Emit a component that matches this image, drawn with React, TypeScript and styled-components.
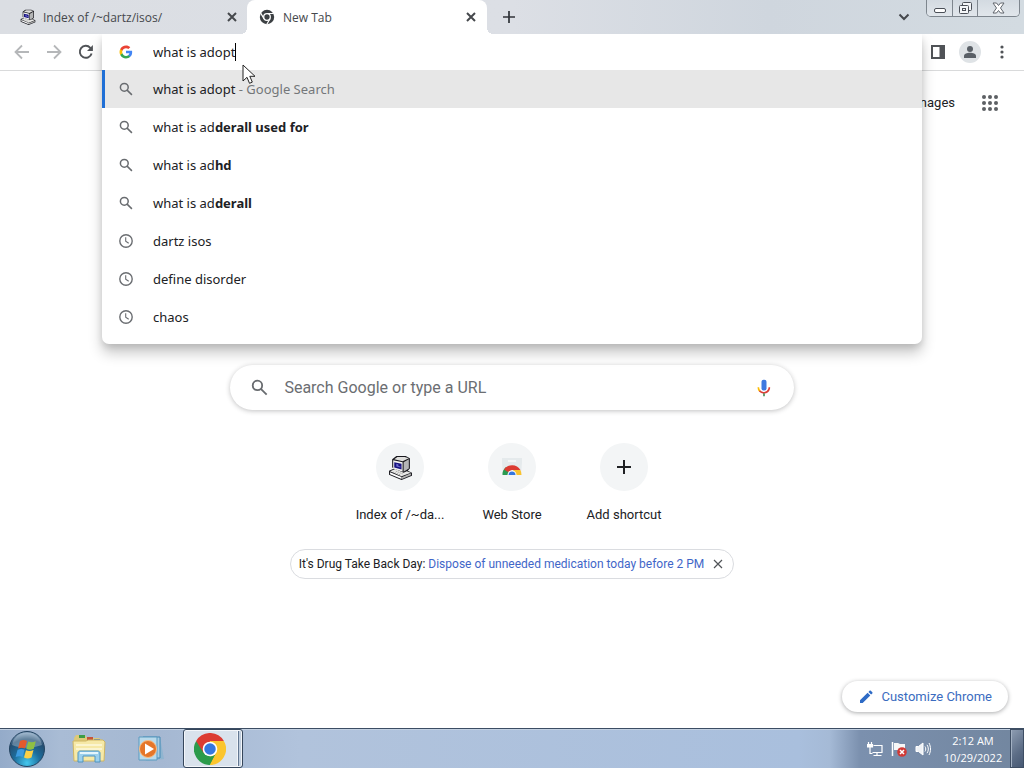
import React from 'react';
import styled, { createGlobalStyle } from 'styled-components';

const ui = '"Open Sans", "Noto Sans", sans-serif';
const omni = '"Noto Sans", "Open Sans", sans-serif';
const web = 'Roboto, "Liberation Sans", sans-serif';

const GlobalStyle = createGlobalStyle`
  * { box-sizing: border-box; }
  body { margin: 0; background: #fff; font-family: ${ui}; color: #202124; }
  button, input { font: inherit; color: inherit; }
  button { border: 0; padding: 0; background: none; }
  svg { display: block; flex: none; }
  a { color: inherit; text-decoration: none; }
`;

const Desktop = styled.div`
  min-height: 100vh;
  display: flex;
  flex-direction: column;
`;

/* ---------- tab strip ---------- */
const TabStrip = styled.header`
  height: 34px;
  display: flex;
  align-items: stretch;
  background: linear-gradient(90deg, #dbdee3 0%, #dcdfe5 50%, #cfd6de 75%, #d3dbe1 100%);
`;

const Tab = styled.div<{ $active?: boolean }>`
  position: relative;
  width: ${p => (p.$active ? 240 : 247)}px;
  padding: 0 10px 0 ${p => (p.$active ? 12 : 20)}px;
  display: flex;
  align-items: center;
  gap: ${p => (p.$active ? 8 : 7)}px;
  font-size: 12px;
  color: #45484c;
  background: ${p => (p.$active ? '#fff' : 'transparent')};
  border-radius: 8px 8px 0 0;
  ${p => p.$active && `
    &::before, &::after {
      content: '';
      position: absolute;
      bottom: 0;
      width: 6px;
      height: 6px;
    }
    &::before { left: -6px; background: radial-gradient(circle at 0 0, transparent 6px, #fff 6px); }
    &::after { right: -6px; background: radial-gradient(circle at 100% 0, transparent 6px, #fff 6px); }
  `}
`;

const TabTitle = styled.span`
  flex: 1;
  white-space: nowrap;
`;

const IconButton = styled.button<{ $size?: number; $round?: string }>`
  width: ${p => p.$size ?? 16}px;
  height: ${p => p.$size ?? 16}px;
  display: grid;
  place-items: center;
  flex: none;
  border-radius: 50%;
  background: ${p => p.$round ?? 'transparent'};
`;

const NewTab = styled.div`
  flex: 1;
  display: flex;
  align-items: center;
  padding-left: 12px;
`;

const TabSearch = styled.div`
  display: flex;
  align-items: center;
  padding-right: 14px;
`;

const WindowButtons = styled.div`
  display: flex;
  height: 17px;
  margin-right: 4px;
  border: 1px solid #7e868e;
  border-top: 0;
  border-radius: 0 0 5px 5px;
  overflow: hidden;
`;

const WindowButton = styled.button<{ $wide?: boolean }>`
  width: ${p => (p.$wide ? 42 : 25)}px;
  display: grid;
  place-items: center;
  background: linear-gradient(#d3dae1, #e1e6eb);
  & + & { border-left: 1px solid #7e868e; }
`;

/* ---------- toolbar ---------- */
const Toolbar = styled.div`
  height: 37px;
  display: flex;
  background: #fff;
  border-bottom: 1px solid #d9dadb;
`;

const Nav = styled.nav`
  width: 102px;
  padding-left: 10px;
  display: flex;
  align-items: center;
  gap: 8px;
`;

const Actions = styled.div`
  width: 102px;
  padding: 0 10px 0 4px;
  display: flex;
  align-items: center;
  justify-content: space-between;
`;

const OmniboxSlot = styled.div`
  position: relative;
  z-index: 2;
  flex: 1;
`;

const Omnibox = styled.div`
  position: absolute;
  top: 0;
  left: 0;
  right: 0;
  padding-bottom: 8px;
  background: #fff;
  border-radius: 0 0 7px 7px;
  box-shadow: 0 9px 14px rgba(0, 0, 0, 0.22), 0 3px 6px rgba(0, 0, 0, 0.1);
  clip-path: inset(0 -24px -32px -24px);
  font-family: ${omni};
  font-size: 13px;
`;

const Field = styled.label`
  height: 36px;
  padding-left: 17px;
  display: flex;
  align-items: center;
`;

const FieldInput = styled.input`
  field-sizing: content;
  margin-left: 20px;
  padding: 0;
  border: 0;
  outline: 0;
  background: none;
`;

const Caret = styled.span`
  width: 1px;
  height: 18px;
  background: #000;
`;

const Suggestions = styled.ul`
  margin: 0;
  padding: 0;
  list-style: none;
`;

const Suggestion = styled.button<{ $selected?: boolean }>`
  width: 100%;
  height: 38px;
  padding-left: 14px;
  display: flex;
  align-items: center;
  gap: 20px;
  border-left: 3px solid ${p => (p.$selected ? '#1f6fd6' : 'transparent')};
  background: ${p => (p.$selected ? '#e7e7e7' : 'transparent')};
  background-clip: border-box;
  white-space: pre;
`;

const Muted = styled.span`
  color: #74777a;
`;

/* ---------- new tab page ---------- */
const Page = styled.main`
  flex: 1;
  display: flex;
  flex-direction: column;
  align-items: center;
  font-family: ${web};
`;

const PageLinks = styled.div`
  align-self: stretch;
  height: 64px;
  padding-right: 24px;
  display: flex;
  align-items: center;
  justify-content: flex-end;
  gap: 25px;
  font-size: 13px;
  line-height: 18px;
`;

const SearchBox = styled.label`
  width: 55%;
  min-width: 300px;
  height: 45px;
  margin-top: 230px;
  padding: 0 20px 0 21px;
  display: flex;
  align-items: center;
  gap: 16px;
  border-radius: 23px;
  background: #fff;
  box-shadow: 0 1px 5px rgba(32, 33, 36, 0.28);
`;

const SearchInput = styled.input`
  flex: 1;
  min-width: 0;
  padding: 0;
  border: 0;
  outline: 0;
  background: none;
  font-size: 16px;
  &::placeholder { color: #6b6e72; opacity: 1; }
`;

const Shortcuts = styled.div`
  display: flex;
  margin-top: 33px;
`;

const Shortcut = styled.a`
  width: 112px;
  display: flex;
  flex-direction: column;
  align-items: center;
  gap: 16px;
  font-size: 13px;
  line-height: 16px;
`;

const Disc = styled.span`
  width: 48px;
  height: 48px;
  display: grid;
  place-items: center;
  border-radius: 50%;
  background: #f3f5f6;
`;

const Promo = styled.p`
  margin: 26px 0 0;
  height: 30px;
  padding: 0 7px 0 8px;
  display: flex;
  align-items: center;
  gap: 6px;
  border: 1px solid #dadce0;
  border-radius: 15px;
  font-size: 12px;
  white-space: nowrap;
  a { color: #3f66c8; }
`;

const Customize = styled.button`
  align-self: flex-end;
  height: 31px;
  margin: auto 16px 16px;
  padding: 0 16px;
  display: flex;
  align-items: center;
  gap: 7px;
  border-radius: 16px;
  background: #fff;
  box-shadow: 0 1px 4px rgba(32, 33, 36, 0.38);
  font-size: 13px;
  color: #3b6cc0;
`;

/* ---------- taskbar ---------- */
const Taskbar = styled.footer`
  height: 40px;
  display: flex;
  align-items: stretch;
  border-top: 1px solid #3c4d63;
  box-shadow: inset 0 1px 0 #c3d1e2;
  background: linear-gradient(90deg, #94abc9 0, #a9bcd5 60px, #a5b8d2 160px, #b1c3dc 300px, #a9bfdd 78%, #a5bad6 81%, #7b90ae 84%, #72869f 100%);
`;

const TaskButton = styled.button<{ $width: number }>`
  width: ${p => p.$width}px;
  display: grid;
  place-items: center;
`;

const ActiveTask = styled.button`
  width: 60px;
  margin-left: 4px;
  display: grid;
  place-items: center start;
  padding-left: 10px;
  border: 1px solid #35465b;
  border-radius: 3px;
  background: linear-gradient(90deg, #d9e2ec 0 53px, #f3f6fa 53px 54px, #627791 54px 55px, #c0cede 55px);
  box-shadow: inset 0 0 0 1px #f3f6fa;
`;

const Tray = styled.div`
  margin-left: auto;
  margin-right: 5px;
  display: flex;
  align-items: center;
  gap: 8px;
`;

const Clock = styled.time`
  width: 74px;
  padding-top: 3px;
  font-size: 11px;
  line-height: 17px;
  text-align: center;
  color: #fff;
`;

const ShowDesktop = styled.button`
  width: 14px;
  border: 1px solid #3e4e64;
  background: linear-gradient(135deg, #8e9db2, #5c6d86 60%, #465873);
  box-shadow: inset 1px 0 0 #a3b1c3;
`;

const Pointer = styled.svg`
  position: absolute;
  z-index: 3;
  left: 140px;
  top: 30px;
  pointer-events: none;
`;

/* ---------- drawings ---------- */
const CloseIcon = ({ size = 10, color = '#45484c', weight = 2 }) => (
  <svg width={size} height={size} viewBox="0 0 10 10" stroke={color} strokeWidth={weight}>
    <path d="M1 1l8 8M9 1L1 9" />
  </svg>
);

const ComputerIcon = ({ size }: { size: number }) => (
  <svg width={size} height={size} viewBox="0 0 24 24">
    <path d="M4 4l4-3h9l4 2v10l-2 2 4 2v3l-10 4L1 19v-4l5-2-2-1z" fill="#17171d" />
    <path d="M5 5l9 2v9l-9-3z" fill="#f3f2f0" />
    <path d="M6 4l3-2h7l4 1-6 3z" fill="#dededc" />
    <path d="M15 7l5-3v9l-5 3z" fill="#b4b5b6" />
    <path d="M6 7l7 1.500v5.500l-7-2z" fill="#17127f" />
    <path d="M8 8.500l2 .5v1.500l2 .5v1l-4-1z" fill="#6e6bd0" />
    <path d="M2 15.500l5-2 8 3.500 3-1.500 4 1.500-9 3.500z" fill="#e9e9e7" />
    <path d="M2 16.500l11 4.500v2L2 18.500z" fill="#fff" />
    <path d="M13.500 21l8.500-3.500v2L13.500 23z" fill="#b5b5b4" />
    <path d="M5 16.500l7 2.800M7.500 15.500l7 2.800" stroke="#8a8a88" strokeWidth=".8" strokeDasharray="1 1" />
  </svg>
);

const MonoChrome = () => (
  <svg width="16" height="16" viewBox="0 0 16 16">
    <circle cx="8" cy="8" r="7.2" fill="#3c4043" />
    <circle cx="8" cy="8" r="3.3" fill="none" stroke="#fff" strokeWidth="1.3" />
    <path d="M8 4.500h6.600M5 9.800L1.700 4.100M11 9.800l-3.300 5.700" stroke="#fff" strokeWidth="1.2" />
  </svg>
);

const ChromeLogo = () => (
  <svg width="32" height="32" viewBox="0 0 48 48">
    <path d="M24 24L3.2 12A24 24 0 0 1 44.8 12z" fill="#dc3b32" />
    <path d="M24 24L3.2 12A24 24 0 0 0 24 48z" fill="#2b9b4b" />
    <path d="M24 24V48A24 24 0 0 0 44.8 12H24z" fill="#fbc52d" />
    <path d="M3.2 12L14.5 30 24 24V12z" fill="#dc3b32" />
    <path d="M14.4 29.5A11 11 0 0 0 33.5 29.5L24 48 19 46z" fill="#2b9b4b" />
    <path d="M33.5 29.5L24 48h3l14-14V20z" fill="#fbc52d" />
    <circle cx="24" cy="24" r="11" fill="#fff" />
    <circle cx="24" cy="24" r="8.6" fill="#3577df" />
  </svg>
);

const GoogleG = () => (
  <svg width="14" height="14" viewBox="0 0 48 48">
    <path fill="#4285f4" d="M45.1 24.5c0-1.6-.1-3.1-.4-4.5H24v8.5h11.8c-.5 2.8-2.1 5.1-4.4 6.7v5.500h7.1c4.2-3.8 6.600-9.500 6.600-16.200z" />
    <path fill="#34a853" d="M24 46c5.9 0 10.9-2 14.6-5.300l-7.100-5.500c-2 1.3-4.5 2.1-7.5 2.1-5.7 0-10.6-3.900-12.300-9.100H4.300v5.700C8 41.1 15.4 46 24 46z" />
    <path fill="#fbbc04" d="M11.7 28.2a13 13 0 0 1 0-8.4v-5.7H4.3a22 22 0 0 0 0 19.8z" />
    <path fill="#ea4335" d="M24 10.8c3.2 0 6.1 1.1 8.4 3.3l6.3-6.3C34.9 4.2 29.9 2 24 2 15.4 2 8 6.9 4.3 14.1l7.4 5.7c1.7-5.2 6.6-9 12.3-9z" />
  </svg>
);

const Magnifier = ({ size = 14 }) => (
  <svg width={size} height={size} viewBox="0 0 14 14" fill="none" stroke="#686b6f" strokeWidth="1.5">
    <circle cx="5.3" cy="5.3" r="3.9" />
    <path d="M8.1 8.1l4.8 4.8" />
  </svg>
);

const ClockIcon = () => (
  <svg width="14" height="14" viewBox="0 0 14 14" fill="none" stroke="#6b6e72" strokeWidth="1.4">
    <circle cx="7" cy="7" r="6.2" />
    <path d="M6.7 3.2v4l3 2" strokeWidth="1.1" />
  </svg>
);

const Arrow = ({ back }: { back?: boolean }) => (
  <svg width="16" height="16" viewBox="0 0 16 16" fill="none" stroke="#b5b7b9" strokeWidth="1.8">
    <path d={back ? 'M15 8H2M8 1.5L1.5 8 8 14.5' : 'M1 8h13M8 1.5L14.5 8 8 14.5'} />
  </svg>
);

const ReloadIcon = () => (
  <svg width="16" height="16" viewBox="0 0 16 16">
    <path d="M13.6 9.4A6 6 0 1 1 12.3 3.8L14 5.5" fill="none" stroke="#505357" strokeWidth="1.9" />
    <path d="M14.9 1v5.900H9z" fill="#505357" />
  </svg>
);

const SidePanelIcon = () => (
  <svg width="16" height="16" viewBox="0 0 16 16">
    <path d="M1 1h14v14H1zM3 3v10h6.500V3z" fillRule="evenodd" fill="#505357" />
  </svg>
);

const PersonIcon = () => (
  <svg width="14" height="14" viewBox="0 0 14 14" fill="#5a6067">
    <circle cx="7" cy="4" r="3" />
    <path d="M1 13v-2c0-2 3-3.2 6-3.2s6 1.2 6 3.2v2z" />
  </svg>
);

const MenuDots = () => (
  <svg width="4" height="14" viewBox="0 0 4 14" fill="#505357">
    {[2, 7, 12].map(y => <circle key={y} cx="2" cy={y} r="1.6" />)}
  </svg>
);

const AppsIcon = () => (
  <svg width="20" height="18" viewBox="0 0 20 18" fill="#5d6064">
    {[3, 9, 15].map(y => [4, 10, 16].map(x => <circle key={`${x}-${y}`} cx={x} cy={y} r="2" />))}
  </svg>
);

const PlusIcon = ({ size = 14, color = '#202124' }) => (
  <svg width={size} height={size} viewBox="0 0 14 14" stroke={color} strokeWidth="2">
    <path d="M7 0v14M0 7h14" />
  </svg>
);

const MicIcon = () => (
  <svg width="20" height="20" viewBox="0 0 24 24" fill="none" strokeWidth="2">
    <rect x="9" y="2" width="6" height="13" rx="2.5" fill="#4079e0" />
    <path d="M5.2 11c0 2 .6 3.5 1.7 4.7" stroke="#fbbc04" />
    <path d="M6.6 15.5c3 3.2 9.2 3.3 11.2-1.5.4-1 .6-2 .6-3" stroke="#dc3f37" />
    <path d="M12 18.3v3.6" stroke="#4c8c57" />
  </svg>
);

const StoreIcon = () => (
  <svg width="24" height="24" viewBox="0 0 24 24">
    <path d="M2 3h20v4l-1 13H3L2 7z" fill="#e5eaec" />
    <path d="M8 5h8v2H8z" fill="#f4f6f6" />
    <path d="M2.5 20a9.5 9.5 0 0 1 3.5-8l4 8z" fill="#2c9a50" />
    <path d="M4 14.5a9.7 9.7 0 0 1 16.4.5H12l-4 2z" fill="#dc3b32" />
    <path d="M13 15h7.4a10 10 0 0 1 1.1 5H14z" fill="#f9c22e" />
    <path d="M7.5 20a4.5 4.5 0 0 1 9 0z" fill="#fff" />
    <path d="M8.5 20a3.5 3.5 0 0 1 7 0z" fill="#3577df" />
  </svg>
);

const PencilIcon = () => (
  <svg width="16" height="16" viewBox="0 0 16 16" fill="#2e6bc6">
    <path d="M2 11.3L9.600 3.700l2.700 2.700L4.700 14H2zM10.400 2.900l1.200-1.200c.4-.4.8-.4 1.200 0l1.500 1.500c.4.4.4.8 0 1.200l-1.200 1.200z" />
  </svg>
);

const StartOrb = () => (
  <svg width="38" height="38" viewBox="0 0 38 38">
    <defs>
      <radialGradient id="orb" cx=".5" cy=".9" r=".85">
        <stop offset="0" stopColor="#43c7ee" />
        <stop offset=".45" stopColor="#1d6d9c" />
        <stop offset=".8" stopColor="#244d70" />
        <stop offset="1" stopColor="#7e9cb8" />
      </radialGradient>
    </defs>
    <circle cx="19" cy="19" r="17.5" fill="url(#orb)" stroke="#244461" />
    <path d="M4 15C6 5 14 2.500 19 2.500S32 5 34 15c-8 3-21 4-30 0z" fill="#d3e2ed" opacity=".35" />
    <path d="M12 11c3-1.500 5-1 7 0l-2 7.500c-2-1-4-1.300-7 0z" fill="#e35a2c" />
    <path d="M20.300 11.500c2 1 4.500 1.200 7.500-.2l-2 7.500c-3 1.300-5 1.100-7.500 0z" fill="#8fc043" />
    <path d="M9.600 19.800c3-1.300 5-1 7 0l-2 7.200c-2-1-4-1.200-7 0z" fill="#3c9be0" />
    <path d="M18 20.300c2 1 4.500 1.200 7.500-.2l-2 7.400c-3 1.300-5 1.100-7.500 0z" fill="#fcd046" />
  </svg>
);

const ExplorerIcon = () => (
  <svg width="34" height="32" viewBox="0 0 34 32">
    <path d="M2 5l2-3h9l2 3h12l4 3v20H2z" fill="#ddc978" />
    <path d="M7 2h6v3H7z" fill="#3d9c46" />
    <path d="M15 4h6v4h-6z" fill="#c5543a" />
    <path d="M22 6h6v3h-6z" fill="#4d7fc0" />
    <path d="M1 8h13l2-1h15l2 2-1 19H2z" fill="#f6e9a7" stroke="#ceb563" />
    <path d="M4 12h26M4 16h26" stroke="#fbf5d0" strokeWidth="2" />
    <path d="M6 29v-9c0-1 1-2 2-2h18c1 0 2 1 2 2v9h-5v-6H11v6z" fill="#9bd0ed" stroke="#4f94bf" />
    <path d="M8 20h18" stroke="#e4f5fc" strokeWidth="2" />
  </svg>
);

const MediaPlayerIcon = () => (
  <svg width="30" height="28" viewBox="0 0 30 28">
    <path d="M8 2h15l4 22-18 2z" fill="#8fb5d0" />
    <path d="M6 2h17v21H6z" fill="#a9cde2" stroke="#4789b4" />
    <path d="M2 2h18v23H2z" fill="#b9daeb" stroke="#5b9bc0" />
    <circle cx="11" cy="14" r="8.500" fill="#e57629" stroke="#f7bd84" />
    <path d="M8 8.500v11l9-5.500z" fill="#fff" />
  </svg>
);

const NetworkIcon = () => (
  <svg width="16" height="16" viewBox="0 0 16 16" fill="none" stroke="#fff" strokeWidth="1.2">
    <path d="M6.500 4.500h8.500v7H5.500M10 11.500v2.500M6.500 14.500h8M1.500 1v3M4.500 1v3M3 6v6.500h2.500" />
    <path d="M.500 3.500h5v2.500h-5z" fill="#fff" />
  </svg>
);

const ActionIcon = () => (
  <svg width="16" height="16" viewBox="0 0 16 16">
    <path d="M1.500 1v14" stroke="#fff" strokeWidth="1.5" />
    <path d="M3 2h4l2 1h5v7H9L7 9H3z" fill="#f7f7f7" />
    <circle cx="11" cy="11" r="4.8" fill="#d13a36" />
    <path d="M9 9l4 4M13 9l-4 4" stroke="#fff" strokeWidth="1.5" />
  </svg>
);

const VolumeIcon = () => (
  <svg width="16" height="16" viewBox="0 0 16 16" fill="none" stroke="#fff">
    <path d="M1 5.500h2.500L8 2v12l-4.500-3.500H1z" fill="#eef1f5" />
    <path d="M10 5.500c1 1.500 1 3.500 0 5M12 3.800c1.800 2.500 1.800 6 0 8.400M14 2c2 4 2 8 0 12" />
  </svg>
);

/* ---------- data ---------- */
type Item = { typed: string; bold?: string; note?: string; history?: boolean };

const items: Item[] = [
  { typed: 'what is adopt', note: ' - Google Search' },
  { typed: 'what is ad', bold: 'derall used for' },
  { typed: 'what is ad', bold: 'hd' },
  { typed: 'what is ad', bold: 'derall' },
  { typed: 'dartz isos', history: true },
  { typed: 'define disorder', history: true },
  { typed: 'chaos', history: true },
];

export default function App() {
  return (
    <Desktop>
      <GlobalStyle />
      <TabStrip>
        <Tab>
          <ComputerIcon size={16} />
          <TabTitle>Index of /~dartz/isos/</TabTitle>
          <IconButton $size={10} aria-label="Close tab"><CloseIcon /></IconButton>
        </Tab>
        <Tab $active>
          <MonoChrome />
          <TabTitle>New Tab</TabTitle>
          <IconButton $size={12} aria-label="Close tab"><CloseIcon /></IconButton>
        </Tab>
        <NewTab>
          <IconButton $size={20} aria-label="New tab"><PlusIcon size={12} color="#303338" /></IconButton>
        </NewTab>
        <TabSearch>
          <IconButton aria-label="Search tabs">
            <svg width="12" height="8" viewBox="0 0 12 8" fill="none" stroke="#45484c" strokeWidth="2"><path d="M1.500 1.500L6 6l4.500-4.500" /></svg>
          </IconButton>
        </TabSearch>
        <WindowButtons>
          <WindowButton aria-label="Minimize">
            <svg width="12" height="16" viewBox="0 0 12 16"><rect x=".5" y="8.5" width="11" height="4" rx="1.5" fill="#fff" stroke="#4b5058" /></svg>
          </WindowButton>
          <WindowButton aria-label="Restore">
            <svg width="14" height="14" viewBox="0 0 14 14" fill="#f4f6f8" stroke="#4b5058">
              <rect x="4.5" y="1.5" width="9" height="8" rx="1" />
              <rect x="1.5" y="4.5" width="9" height="8" rx="1" />
              <rect x="4.5" y="7.5" width="3" height="2" />
            </svg>
          </WindowButton>
          <WindowButton $wide aria-label="Close">
            <svg width="13" height="12" viewBox="0 0 13 12" fill="#fff" stroke="#60656c">
              <path d="M1 1h3.500l2 2.500L8.500 1H12L8.500 6l3.500 5H8.500l-2-2.500-2 2.500H1l3.500-5z" />
            </svg>
          </WindowButton>
        </WindowButtons>
      </TabStrip>

      <Toolbar>
        <Nav aria-label="Navigation">
          <IconButton $size={24} aria-label="Back"><Arrow back /></IconButton>
          <IconButton $size={24} aria-label="Forward"><Arrow /></IconButton>
          <IconButton $size={24} aria-label="Reload"><ReloadIcon /></IconButton>
        </Nav>
        <OmniboxSlot>
          <Omnibox>
            <Field>
              <GoogleG />
              <FieldInput aria-label="Address and search bar" defaultValue="what is adopt" />
              <Caret />
            </Field>
            <Suggestions>
              {items.map((item, i) => (
                <li key={item.typed + (item.bold ?? '')}>
                  <Suggestion $selected={i === 0}>
                    {item.history ? <ClockIcon /> : <Magnifier />}
                    <span>
                      {item.typed}
                      {item.bold && <b>{item.bold}</b>}
                      {item.note && <Muted>{item.note}</Muted>}
                    </span>
                  </Suggestion>
                </li>
              ))}
            </Suggestions>
          </Omnibox>
          <Pointer width="14" height="21" viewBox="0 0 14 21">
            <path d="M1 1v16l4-3.700 2.500 6 2.800-1.200-2.500-5.800H13z" fill="#fff" stroke="#222" />
          </Pointer>
        </OmniboxSlot>
        <Actions>
          <IconButton $size={24} aria-label="Side panel"><SidePanelIcon /></IconButton>
          <IconButton $size={22} $round="#dfe3e6" aria-label="Profile"><PersonIcon /></IconButton>
          <IconButton $size={24} aria-label="Menu"><MenuDots /></IconButton>
        </Actions>
      </Toolbar>

      <Page>
        <PageLinks>
          <a href="#images">Images</a>
          <IconButton $size={20} aria-label="Google apps"><AppsIcon /></IconButton>
        </PageLinks>
        <SearchBox>
          <Magnifier size={17} />
          <SearchInput aria-label="Search" placeholder="Search Google or type a URL" />
          <IconButton $size={20} aria-label="Search by voice"><MicIcon /></IconButton>
        </SearchBox>
        <Shortcuts>
          <Shortcut href="#isos"><Disc><ComputerIcon size={25} /></Disc>Index of /~da...</Shortcut>
          <Shortcut href="#store"><Disc><StoreIcon /></Disc>Web Store</Shortcut>
          <Shortcut href="#add"><Disc><PlusIcon /></Disc>Add shortcut</Shortcut>
        </Shortcuts>
        <Promo>
          <span>It's Drug Take Back Day: <a href="#dispose">Dispose of unneeded medication today before 2 PM</a></span>
          <IconButton aria-label="Dismiss"><CloseIcon weight={1.2} color="#505357" /></IconButton>
        </Promo>
        <Customize><PencilIcon />Customize Chrome</Customize>
      </Page>

      <Taskbar>
        <TaskButton $width={54} aria-label="Start"><StartOrb /></TaskButton>
        <TaskButton $width={70} aria-label="File Explorer"><ExplorerIcon /></TaskButton>
        <TaskButton $width={55} aria-label="Media Player"><MediaPlayerIcon /></TaskButton>
        <ActiveTask aria-label="Google Chrome"><ChromeLogo /></ActiveTask>
        <Tray>
          <IconButton aria-label="Network"><NetworkIcon /></IconButton>
          <IconButton aria-label="Action Center"><ActionIcon /></IconButton>
          <IconButton aria-label="Volume"><VolumeIcon /></IconButton>
        </Tray>
        <Clock>2:12 AM<br />10/29/2022</Clock>
        <ShowDesktop aria-label="Show desktop" />
      </Taskbar>
    </Desktop>
  );
}
